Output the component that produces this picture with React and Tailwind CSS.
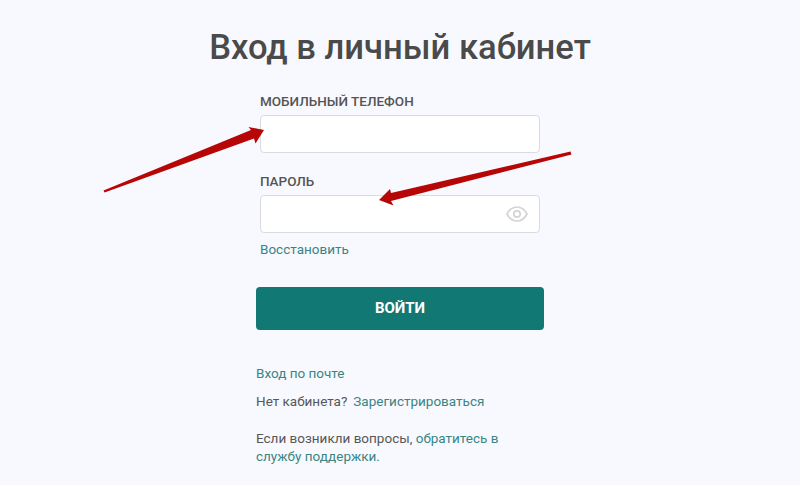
function EyeIcon() {
  return (
    <svg width="22" height="18" viewBox="0 0 22 18" fill="none" stroke="#d2d4d6" strokeWidth="1.7">
      <path d="M1 9C3.5 4.2 7 2 11 2s7.5 2.2 10 7c-2.5 4.8-6 7-10 7S3.5 13.8 1 9Z" />
      <circle cx="11" cy="9" r="3.2" />
    </svg>
  );
}

function Arrows() {
  return (
    <svg className="absolute left-0 top-0 pointer-events-none" width="800" height="485" viewBox="0 0 800 485">
      <path d="M103.5 190.5L251 130L248.5 127L264 130L255.5 143.5L254 138.5L104.5 192.5Z" fill="#b70606" />
      <path d="M570.5 151.5L391 193L390 189L379 200L393.5 205.5L391 201L571.5 154.5Z" fill="#b70606" />
    </svg>
  );
}

export default function App() {
  return (
    <div className="relative h-[485px] w-[800px] overflow-hidden bg-[#f8f9ff] font-['Roboto',sans-serif] text-[#575757]">
      <h1 className="pt-[25px] text-center text-[34.6px] font-medium leading-[44px] text-[#4a4a4a]">Вход в личный кабинет</h1>

      <div className="mx-auto mt-[22px] w-[288px]">
        <div className="px-1">
          <label className="block text-[13.5px] font-medium leading-[20px] text-[#555555]">МОБИЛЬНЫЙ ТЕЛЕФОН</label>
          <div className="mt-[4px] h-[38px] rounded border border-[#d9dbe0] bg-white"></div>

          <label className="mt-[18px] block text-[13.5px] font-medium leading-[20px] text-[#555555]">ПАРОЛЬ</label>
          <div className="mt-[4px] flex h-[38px] items-center justify-end rounded border border-[#d9dbe0] bg-white pr-[11px]">
            <EyeIcon />
          </div>
          <a className="mt-[6px] block text-[13.5px] leading-[20px] text-[#3a8583]">Восстановить</a>
        </div>

        <button className="mt-[28px] h-[43px] w-full rounded bg-[#117873] text-[15px] font-bold text-white">ВОЙТИ</button>

        <a className="mt-[33px] block text-[13.5px] leading-[20px] text-[#3a8583]">Вход по почте</a>
        <p className="mt-[8px] text-[13.5px] leading-[20px]">
          Нет кабинета?<span className="ml-[6px] text-[#3a8583]">Зарегистрироваться</span>
        </p>
        <p className="mt-[18px] w-[250px] text-[13.5px] leading-[18px]">
          Если возникли вопросы, <span className="text-[#3a8583]">обратитесь в</span>
          <br />
          <span className="text-[#3a8583]">службу поддержки.</span>
        </p>
      </div>

      <Arrows />
    </div>
  );
}
